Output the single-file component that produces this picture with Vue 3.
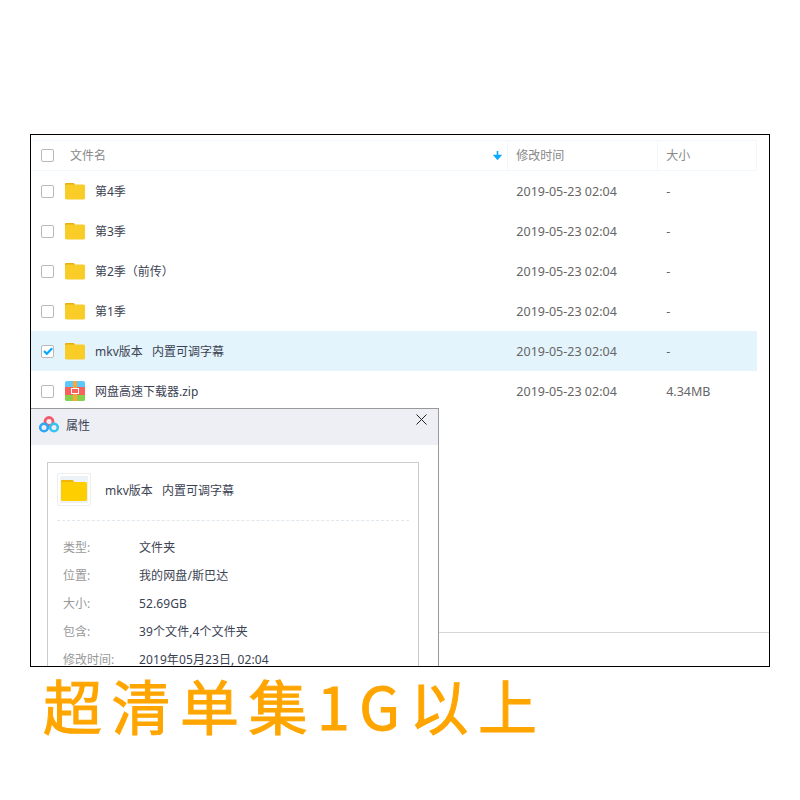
<template>
  <div class="page">
    <div class="frame">
      <div class="list">
        <div class="head">
          <div class="col-name">
            <span class="check"></span>
            <span class="head-title">文件名</span>
            <svg class="sort" width="9" height="10" viewBox="0 0 9 10">
              <path d="M4.500 1v7M1.500 5.500l3 3.500 3-3.500z" fill="#09aaff" stroke="#09aaff" stroke-width="1.600" />
            </svg>
          </div>
          <div class="col-time">修改时间</div>
          <div class="col-size">大小</div>
        </div>

        <div v-for="row in rows" :key="row.name" class="row" :class="{ selected: row.checked }">
          <div class="col-name">
            <span class="check" :class="{ on: row.checked }">
              <svg v-if="row.checked" width="10" height="8" viewBox="0 0 10 8">
                <path d="M1 4l2.800 2.800L9.200 1.200" fill="none" stroke="#09aaff" stroke-width="2.200" />
              </svg>
            </span>
            <svg v-if="row.zip" class="file-icon" width="20" height="20" viewBox="0 0 20 20">
              <rect width="20" height="20" rx="2" fill="#5cc8fb" />
              <rect y="6" width="20" height="8" fill="#f9615c" />
              <path d="M0 14h20v4a2 2 0 0 1-2 2H2a2 2 0 0 1-2-2z" fill="#86d04a" />
              <rect x="8" width="4" height="20" fill="#f7a93b" />
              <rect x="6.500" y="7.500" width="7" height="5" fill="#f9615c" stroke="#fff" />
            </svg>
            <svg v-else class="file-icon" width="20" height="18" viewBox="0 0 20 18">
              <path d="M0 2a1 1 0 0 1 1-1h7a2 2 0 0 1 2 1.500V5H0z" fill="#e8ae0c" />
              <rect y="2.500" width="20" height="15" rx="1.500" fill="#facc27" />
            </svg>
            <span class="file-name">{{ row.name }}</span>
          </div>
          <div class="col-time cell">2019-05-23 02:04</div>
          <div class="col-size cell">{{ row.size }}</div>
        </div>
      </div>
      <div class="footer"></div>

      <div class="dialog">
        <div class="dialog-head">
          <svg width="20" height="17" viewBox="0 0 20 17">
            <circle cx="10" cy="5.500" r="4" fill="none" stroke="#f2596a" stroke-width="2.800" />
            <circle cx="5" cy="11.500" r="3.800" fill="none" stroke="#2ea8f5" stroke-width="2.600" />
            <circle cx="15" cy="11.500" r="3.800" fill="none" stroke="#33c5f0" stroke-width="2.600" />
          </svg>
          <span class="dialog-title">属性</span>
          <svg class="close" width="11" height="11" viewBox="0 0 11 11">
            <path d="M.5.500l10 10M10.500.500l-10 10" stroke="#222" stroke-width="1" />
          </svg>
        </div>
        <div class="dialog-body">
          <div class="info">
            <div class="info-top">
              <span class="thumb">
                <svg width="26" height="22" viewBox="0 0 26 22">
                  <path d="M0 2a1 1 0 0 1 1-1h10a2 2 0 0 1 2 2v2H0z" fill="#f2b705" />
                  <rect y="3" width="26" height="19" rx="1.500" fill="#ffce00" />
                </svg>
              </span>
              <span class="file-name">mkv版本&nbsp;&nbsp;&nbsp;内置可调字幕</span>
            </div>
            <div v-for="item in props" :key="item.label" class="prop">
              <span class="prop-label">{{ item.label }}</span>
              <span class="prop-value">{{ item.value }}</span>
            </div>
          </div>
        </div>
      </div>
    </div>
    <div class="banner">超清单集1G以上</div>
  </div>
</template>

<script setup>
const rows = [
  { name: "第4季", size: "-" },
  { name: "第3季", size: "-" },
  { name: "第2季（前传）", size: "-" },
  { name: "第1季", size: "-" },
  { name: "mkv版本\u00a0\u00a0\u00a0内置可调字幕", size: "-", checked: true },
  { name: "网盘高速下载器.zip", size: "4.34MB", zip: true },
];

const props = [
  { label: "类型:", value: "文件夹" },
  { label: "位置:", value: "我的网盘/斯巴达" },
  { label: "大小:", value: "52.69GB" },
  { label: "包含:", value: "39个文件,4个文件夹" },
  { label: "修改时间:", value: "2019年05月23日, 02:04" },
];
</script>

<style>
html,
body {
  margin: 0;
  background: #fff;
}
</style>

<style scoped>
.page {
  width: 800px;
  height: 800px;
  padding-top: 134px;
  box-sizing: border-box;
  font-family: "Noto Sans", "Noto Sans CJK SC", sans-serif;
  font-size: 12px;
  color: #3b4252;
  overflow: hidden;
}

.frame {
  position: relative;
  margin-left: 30px;
  width: 740px;
  height: 533px;
  box-sizing: border-box;
  border: 1px solid #000;
  display: flex;
  flex-direction: column;
  overflow: hidden;
}

.list {
  flex: 1;
  padding-top: 5px;
  margin-right: 12px;
}

.head {
  display: flex;
  height: 29px;
  align-items: center;
  border-top: 1px solid #f2f6fd;
  border-bottom: 1px solid #f2f6fd;
  color: #888;
}

.head > div {
  padding-bottom: 2px;
}

.head .check {
  margin-top: 2px;
}

.col-name {
  width: 477px;
  display: flex;
  align-items: center;
  height: 100%;
  box-sizing: border-box;
  padding-left: 10px;
}

.col-time {
  width: 150px;
  box-sizing: border-box;
  padding-left: 8px;
  height: 100%;
  display: flex;
  align-items: center;
  border-left: 1px solid #f2f6fd;
}

.col-size {
  width: 100px;
  box-sizing: border-box;
  padding-left: 8px;
  height: 100%;
  display: flex;
  align-items: center;
  border-left: 1px solid #f2f6fd;
  border-right: 1px solid #f2f6fd;
}

.head-title {
  margin-left: 16px;
}

.sort {
  margin-left: auto;
  margin-right: 5px;
}

.row {
  display: flex;
  height: 40px;
  align-items: center;
}

.row.selected {
  background: #e3f4fd;
}

.cell {
  border: none;
  font-size: 12.500px;
  color: #666;
}

.col-time.cell {
  padding-left: 9px;
}

.col-size.cell {
  padding-left: 9px;
}

.check {
  width: 13px;
  height: 13px;
  flex: none;
  box-sizing: border-box;
  border: 1px solid #b9b9b9;
  border-radius: 2px;
  display: flex;
  align-items: center;
  justify-content: center;
  background: #fff;
}

.file-icon {
  flex: none;
  margin-left: 11px;
}

.file-name {
  margin-left: 10px;
  color: #3b4252;
}

.footer {
  height: 34px;
  flex: none;
  box-sizing: border-box;
  border-top: 1px solid #d6d6d6;
}

.dialog {
  position: absolute;
  left: -1px;
  top: 273px;
  width: 409px;
  height: 280px;
  box-sizing: border-box;
  border: 1px solid #999;
  background: #fff;
}

.dialog-head {
  display: flex;
  align-items: center;
  height: 36px;
  box-sizing: border-box;
  padding: 0 0 5px 8px;
  background: #eeeff4;
  position: relative;
}

.dialog-title {
  margin-left: 7px;
}

.close {
  position: absolute;
  right: 11px;
  top: 5px;
}

.dialog-body {
  padding: 17px 19px 0 16px;
}

.info {
  border: 1px solid #ccc;
  height: 240px;
  padding: 0 9px;
}

.info-top {
  display: flex;
  align-items: center;
  height: 57px;
  border-bottom: 1px dashed #e0e8ee;
  margin-bottom: 12px;
}

.thumb {
  width: 32px;
  height: 31px;
  border: 1px solid #eee;
  display: flex;
  align-items: center;
  justify-content: center;
  margin-top: -4px;
  border-radius: 2px;
  background: #ecf2f5;
  box-shadow: inset 0 0 0 2px #fff;
}

.info-top .file-name {
  margin-left: 14px;
  margin-top: -3px;
}

.prop {
  display: flex;
  height: 28px;
  align-items: center;
  padding-left: 6px;
}

.prop-label {
  width: 76px;
  color: #999;
}

.prop-value {
  color: #3b4252;
  letter-spacing: 0.1px;
}

.banner {
  font-family: "Noto Sans CJK SC", "Noto Sans", sans-serif;
  font-size: 59px;
  font-weight: 400;
  -webkit-text-stroke: 1px #ffa500;
  letter-spacing: 9.500px;
  color: #ffa500;
  line-height: 64px;
  margin-left: 43px;
  margin-top: 6px;
  white-space: nowrap;
}
</style>
